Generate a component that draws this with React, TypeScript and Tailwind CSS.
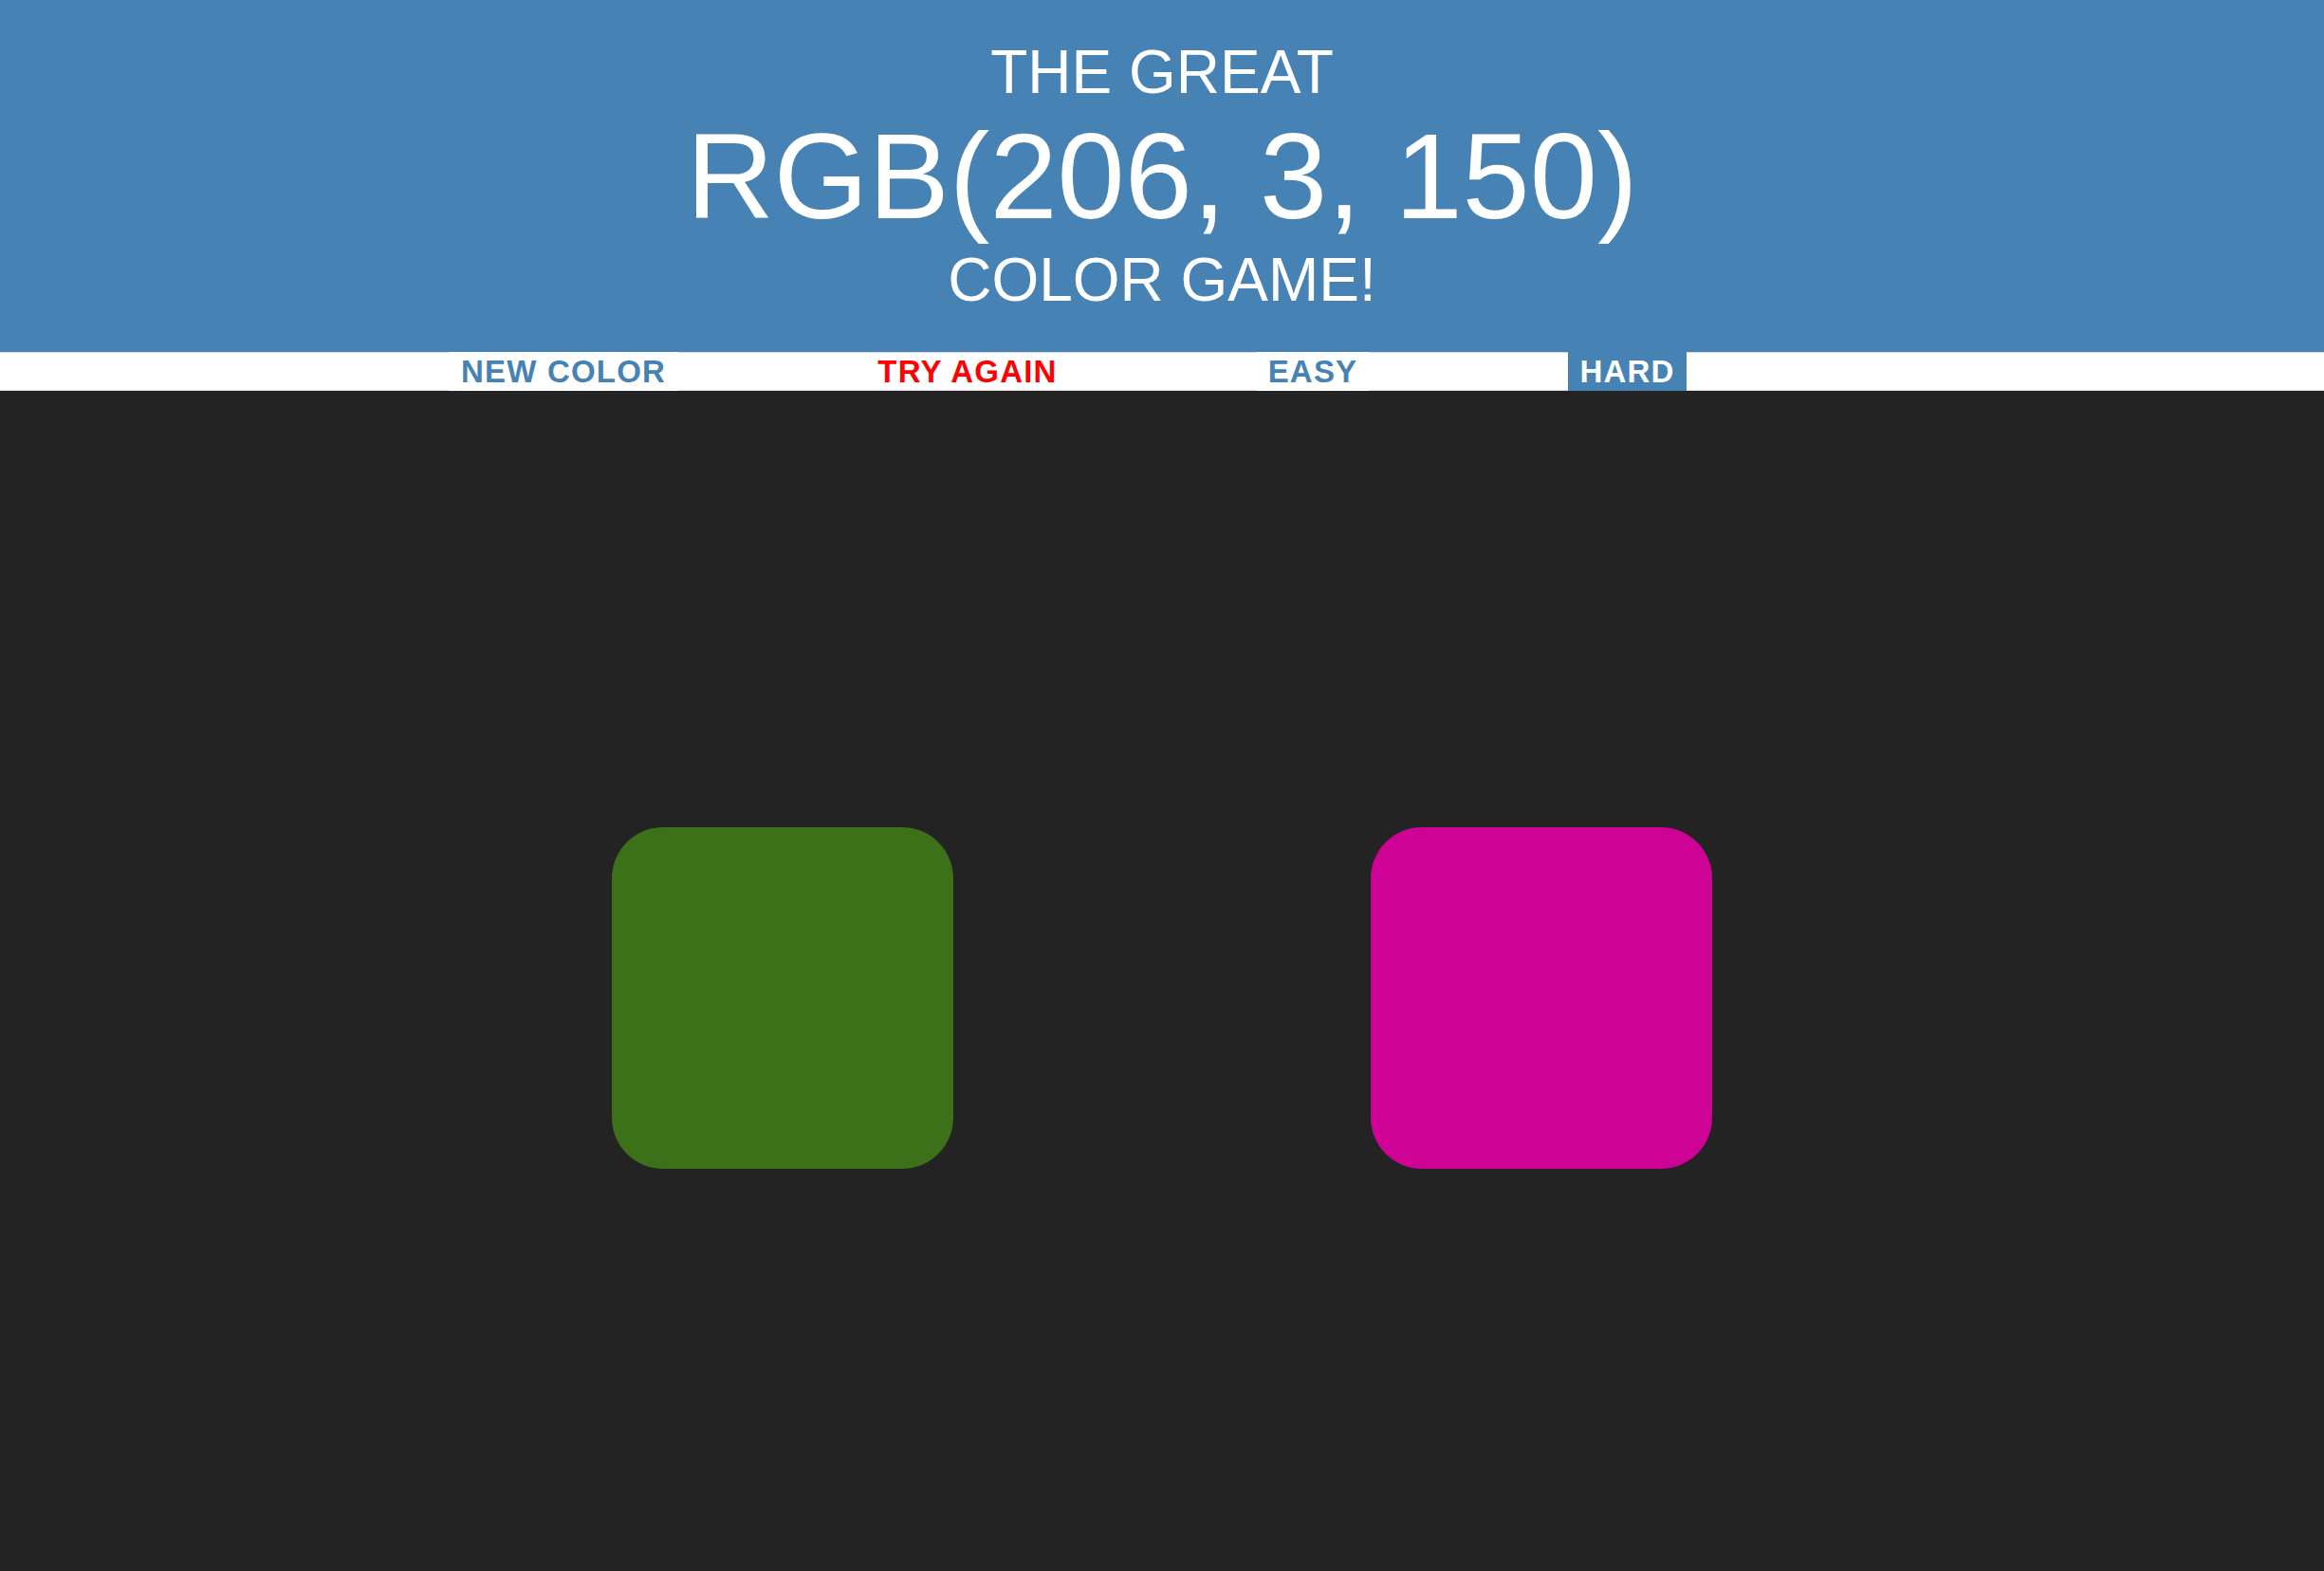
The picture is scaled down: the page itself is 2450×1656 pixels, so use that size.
import React from "react";

const squares = [
  "#232323",
  "#232323",
  "#232323",
  "#3c7019",
  "#232323",
  "rgb(206, 3, 150)",
];

const btn =
  "-my-px bg-white text-center text-[33px] font-bold uppercase tracking-[1.2px] leading-[41px]";

export default function App() {
  return (
    <div
      className="min-h-[1656px] w-full bg-[#232323]"
      style={{ fontFamily: '"Liberation Sans", Arial, sans-serif' }}
    >
      {/* Title */}
      <h1 className="flex flex-col items-center gap-[13.5px] bg-[#4682b4] pt-[44px] pb-[44px] text-white font-normal uppercase leading-none">
        <span className="text-[64px] leading-[64px]">The Great</span>
        <span className="text-[128px] leading-[128px]">RGB(206, 3, 150)</span>
        <span className="text-[64px] leading-[64px]">Color Game!</span>
      </h1>

      {/* Stripe */}
      <div className="flex h-[41px] items-stretch bg-white border-y border-[#dcdcdc] pl-[473px]">
        <button className={`${btn} w-[242px] text-[#4682b4]`}>New Color</button>
        <span className="w-[610px] text-center text-[33px] font-bold uppercase tracking-[1.2px] leading-[39px] text-[#ff0000]">
          Try Again
        </span>
        <button className={`${btn} w-[118px] text-[#4682b4]`}>Easy</button>
        <button className="-my-px ml-[210px] w-[125px] bg-[#4682b4] text-center text-[33px] font-bold uppercase tracking-[1.2px] leading-[41px] text-white">
          Hard
        </button>
      </div>

      {/* Squares */}
      <div className="mx-auto mt-[40px] grid w-[1200px] grid-cols-3 gap-[40px] p-[20px]">
        {squares.map((c, i) => (
          <div
            key={i}
            className="h-[360px] w-[360px] rounded-[54px]"
            style={{ backgroundColor: c }}
          />
        ))}
      </div>
    </div>
  );
}
